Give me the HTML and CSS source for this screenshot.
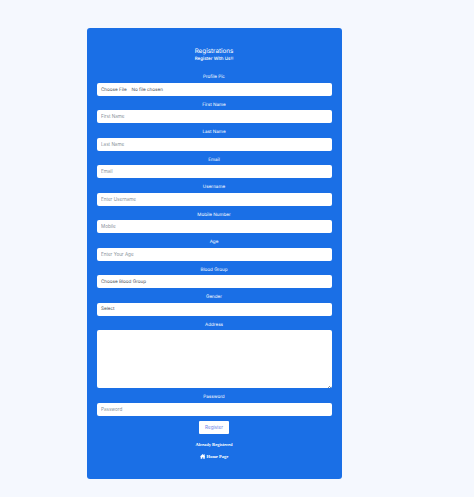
FILE: index.html
```html
<!DOCTYPE html>
<html>

<head>
    <title>Registrations</title>
    <meta charset="UTF-8">
    <meta name="viewport" content="width=device-width, initial-scale=1.0">
    <link rel="stylesheet" href="styles.css">
</head>

<body>
    <div class="container">
        <h2>Registrations</h2>
        <p class="subtitle">Register With Us!!</p>
        <form class="register-form">
            <div class="form-group">
                <label for="pic">Profile Pic</label>
                <div class="field file-field" id="pic"><span class="file-btn">Choose File</span><span>No file chosen</span></div>
            </div>
            <div class="form-group">
                <label for="first_name">First Name</label>
                <input type="text" id="first_name" placeholder="First Name">
            </div>
            <div class="form-group">
                <label for="last_name">Last Name</label>
                <input type="text" id="last_name" placeholder="Last Name">
            </div>
            <div class="form-group">
                <label for="email">Email</label>
                <input type="email" id="email" placeholder="Email">
            </div>
            <div class="form-group">
                <label for="username">Username</label>
                <input type="text" id="username" placeholder="Enter Username">
            </div>
            <div class="form-group">
                <label for="mobile">Mobile Number</label>
                <input type="text" id="mobile" placeholder="Mobile">
            </div>
            <div class="form-group">
                <label for="age">Age</label>
                <input type="text" id="age" placeholder="Enter Your Age">
            </div>
            <div class="form-group">
                <label for="blood">Blood Group</label>
                <div class="field" id="blood">Choose Blood Group</div>
            </div>
            <div class="form-group">
                <label for="gender">Gender</label>
                <div class="field" id="gender">Select</div>
            </div>
            <div class="form-group">
                <label for="address">Address</label>
                <textarea id="address"></textarea>
            </div>
            <div class="form-group">
                <label for="password">Password</label>
                <input type="password" id="password" placeholder="Password">
            </div>
            <button type="submit">Register</button>
        </form>
        <a class="serif-link" href="#">Already Registered</a>
        <a class="serif-link" href="#">
            <svg viewBox="0 0 16 14" width="5.500" height="4.800"><path d="M8 0 0 7l1 1 1-.8V14h4.500V9.500h3V14H14V7.200l1 .8 1-1-2.500-2.200V1h-2v3z" fill="#fff"/></svg>
            Home Page
        </a>
    </div>
</body>

</html>
```

FILE: styles.css
```css
* {
    box-sizing: border-box;
}

body {
    margin: 0;
    height: 497px;
    overflow: hidden;
    padding-top: 28px;
    display: flex;
    justify-content: center;
    font-family: Inter, "Liberation Sans", sans-serif;
    text-rendering: geometricPrecision;
    background-color: #f5f8fe;
}

.container {
    width: 255px;
    height: 451px;
    margin-right: 46px;
    padding: 19px 10px 0;
    border-radius: 3px;
    background-color: #1a6fe6;
    color: white;
    text-align: center;
}

h2 {
    margin: 0;
    font-size: 6.300px;
    font-weight: 400;
    line-height: 9px;
}

.subtitle {
    margin: 1px 0 6.300px;
    font-size: 4.500px;
    font-weight: 500;
    line-height: 6px;
}

.form-group {
    margin-bottom: 1px;
}

.form-group label {
    display: block;
    height: 13.700px;
    padding-top: 6px;
    font-size: 4.600px;
    line-height: 6px;
}

.form-group input,
.field {
    display: block;
    width: 100%;
    height: 12.800px;
    padding: 0 4.500px;
    border: none;
    border-radius: 2px;
    background-color: white;
    color: #495057;
    font-family: inherit;
    font-size: 4.600px;
    line-height: 12.800px;
    text-align: left;
    outline: none;
}

.field {
    padding-top: 1.500px;
}

.form-group input::placeholder {
    color: #8a939b;
    opacity: 1;
}

.file-field {
    display: flex;
    align-items: center;
    padding-top: 4px;
}

.file-btn {
    margin-right: 5px;
}

.form-group textarea {
    display: block;
    width: 100%;
    height: 58px;
    border: none;
    border-radius: 2px;
    resize: none;
    background: linear-gradient(135deg, transparent 50%, #8a939b 50%, #8a939b 62%, transparent 62%, transparent 75%, #8a939b 75%, #8a939b 87%, transparent 87%) no-repeat right 0.500px bottom 0.500px / 3px 3px, white;
}

button {
    display: block;
    width: 30px;
    height: 13px;
    margin: 5.500px auto 0;
    padding: 0;
    border: none;
    border-radius: 1px;
    background-color: white;
    color: #6c83e8;
    font-family: inherit;
    font-size: 4.600px;
}

.serif-link {
    display: block;
    margin-top: 6.500px;
    color: white;
    font-family: "Liberation Serif", serif;
    font-size: 4.500px;
    font-weight: bold;
    line-height: 8px;
    text-decoration: none;
}

.serif-link + .serif-link {
    margin-top: 4.500px;
}

.serif-link svg {
    vertical-align: -0.500px;
}
```
